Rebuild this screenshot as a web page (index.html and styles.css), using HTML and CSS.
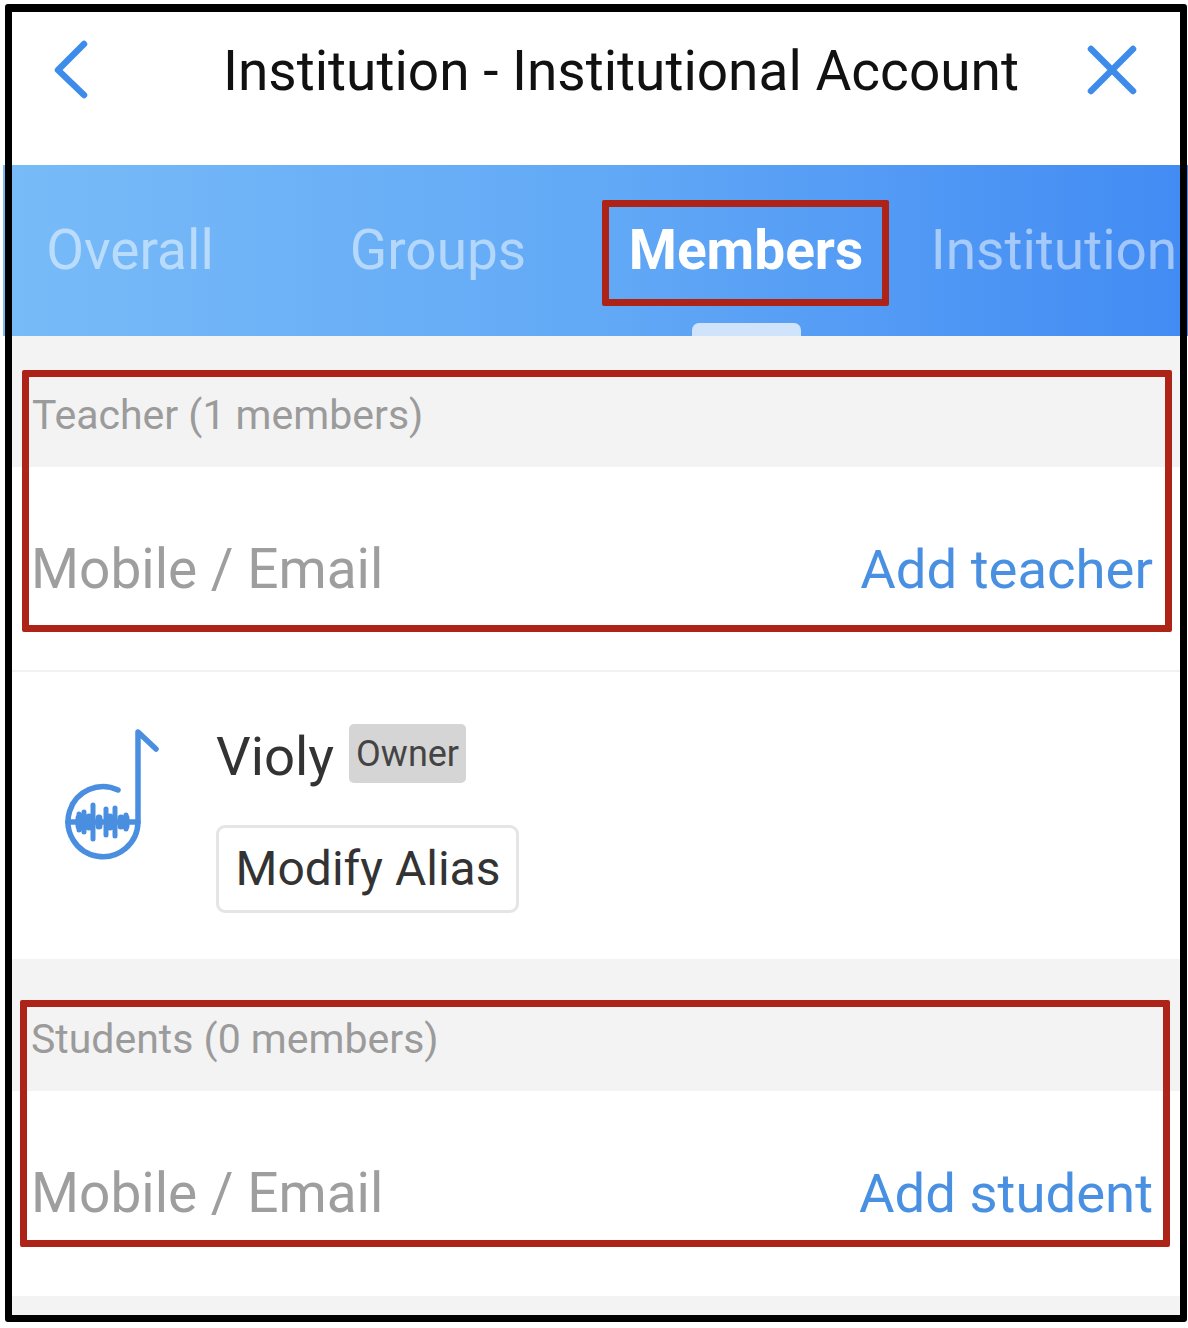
FILE: index.html
```html
<!DOCTYPE html>
<html lang="en">
<head>
    <meta charset="UTF-8">
    <meta name="viewport" content="width=device-width, initial-scale=1.0">
    <title>Institution - Institutional Account</title>
    <link rel="stylesheet" href="styles.css">
</head>
<body>
    <div class="screen">
        <header class="topbar">
            <svg class="topbar-icon" width="48" height="64" viewBox="0 0 48 64">
                <path d="M34 5 L8 31 L34 56" />
            </svg>
            <h1 class="title">Institution - Institutional Account</h1>
            <svg class="topbar-icon" width="56" height="56" viewBox="0 0 56 56">
                <path d="M7 6 L49 48 M49 6 L7 48" />
            </svg>
        </header>

        <nav class="tabs">
            <div class="tab">Overall</div>
            <div class="tab">Groups</div>
            <div class="tab tab-active">
                Members
                <span class="tab-mark"></span>
                <span class="tab-bar"></span>
            </div>
            <div class="tab">Institution</div>
        </nav>

        <section class="group">
            <div class="group-head">Teacher (1 members)</div>
            <div class="add-row add-row-line">
                <span class="add-input">Mobile / Email</span>
                <span class="add-link">Add teacher</span>
            </div>
            <div class="mark mark-teacher"></div>
        </section>

        <div class="member">
            <svg class="avatar" width="100" height="140" viewBox="0 0 100 140">
                <path d="M58 65 A35 35 0 1 0 78 97 V7 L96 24" />
                <path d="M8 97 H78" />
                <path class="wave" d="M19 89 V105 M24 87 V107 M33 80 V114 M46 84 V110 M55 83 V111 M66 90 V104" />
                <path class="wave-thick" d="M19 93 V101 M29 92 V102 M39 93 V101 M50 92 V102 M61 93 V101 M66 93 V101" />
            </svg>
            <div class="member-info">
                <div class="member-top">
                    <span class="member-name">Violy</span>
                    <span class="member-tag">Owner</span>
                </div>
                <button class="alias-btn">Modify Alias</button>
            </div>
        </div>

        <section class="group">
            <div class="group-head group-head-students">Students (0 members)</div>
            <div class="add-row add-row-students">
                <span class="add-input">Mobile / Email</span>
                <span class="add-link">Add student</span>
            </div>
            <div class="mark mark-students"></div>
        </section>

        <div class="bottom-gap"></div>
    </div>
</body>
</html>
```

FILE: styles.css
```css
html, body {
    margin: 0;
    padding: 0;
    background-color: #fff;
}
body {
    font-family: Roboto, "Liberation Sans", sans-serif;
    height: 1328px;
    overflow: hidden;
}
.screen {
    position: relative;
    margin: 12px 8px 0 12px;
    height: 1303px;
    background-color: #fff;
}
.screen::after {
    content: '';
    position: absolute;
    top: -8px;
    left: -7px;
    right: -7px;
    bottom: -7px;
    border: 7px solid #000;
    border-top-width: 8px;
    border-radius: 3px;
    pointer-events: none;
}
.topbar {
    display: flex;
    align-items: center;
    height: 117px;
    padding: 0 40px 36px 38px;
}
.topbar-icon {
    fill: none;
    stroke: #3d8bea;
    stroke-width: 6.5;
    stroke-linecap: round;
    stroke-linejoin: round;
    flex: none;
}
.title {
    margin: 0 auto 0 125px;
    font-size: 55px;
    font-weight: 400;
    color: #111;
    white-space: nowrap;
}
.tabs {
    display: grid;
    grid-template-columns: repeat(4, 308px);
    height: 171px;
    margin: 0 -8px 0 -9px;
    overflow: hidden;
    background: linear-gradient(90deg, #78bbf8 0%, #62a9f6 50%, #428bf3 100%);
}
.tab {
    position: relative;
    left: -27px;
    display: flex;
    align-items: center;
    justify-content: center;
    padding-bottom: 1px;
    font-size: 55px;
    color: rgba(255, 255, 255, 0.5);
    white-space: nowrap;
}
.tab-active {
    color: #fff;
    font-weight: 700;
}
.tab-mark {
    position: absolute;
    left: 10px;
    top: 35px;
    width: 287px;
    height: 106px;
    box-sizing: border-box;
    border: 7px solid #ae2318;
    border-radius: 2px;
}
.tab-bar {
    position: absolute;
    left: 100px;
    bottom: 0;
    width: 109px;
    height: 13px;
    background-color: #cfe3fa;
    border-radius: 7px 7px 0 0;
}
.group {
    position: relative;
}
.group-head {
    box-sizing: border-box;
    height: 131px;
    padding: 54px 0 0 20px;
    font-size: 41px;
    line-height: 50px;
    color: #9b9b9b;
    background-color: #f3f3f3;
}
.group-head-students {
    height: 132px;
    padding-top: 55px;
    padding-left: 19px;
}
.add-row {
    display: flex;
    align-items: center;
    justify-content: space-between;
    height: 205px;
    padding: 0 27px 0 19px;
    box-sizing: border-box;
    font-size: 55px;
}
.add-row-line {
    border-bottom: 2px solid #f1f1f1;
}
.add-row-students {
    padding-bottom: 2px;
}
.add-input {
    color: #9e9e9e;
}
.add-link {
    font-size: 54.5px;
    color: #4a90e2;
}
.mark {
    position: absolute;
    box-sizing: border-box;
    border: 7px solid #ae2318;
    border-radius: 2px;
}
.mark-teacher {
    left: 10px;
    top: 34px;
    width: 1150px;
    height: 262px;
}
.mark-students {
    left: 8px;
    top: 41px;
    width: 1150px;
    height: 247px;
}
.member {
    display: flex;
    height: 287px;
    padding: 52px 0 0 48px;
    box-sizing: border-box;
}
.avatar {
    flex: none;
    fill: none;
    stroke: #4a8ee0;
    stroke-width: 5.5;
    stroke-linecap: round;
    stroke-linejoin: round;
    margin-top: 1px;
}
.wave {
    stroke-width: 5;
}
.wave-thick {
    stroke-width: 7;
}
.member-info {
    margin-left: 56px;
}
.member-top {
    display: flex;
    align-items: center;
    height: 59px;
}
.member-name {
    position: relative;
    top: 2px;
    font-size: 54.5px;
    color: #333;
}
.member-tag {
    display: flex;
    align-items: center;
    height: 59px;
    margin-left: 15px;
    padding: 0 7px;
    font-size: 36px;
    color: #444;
    background-color: #d5d5d5;
    border-radius: 5px;
}
.alias-btn {
    display: block;
    width: 303px;
    height: 88px;
    margin-top: 42px;
    padding: 0 0 2px 1px;
    font-family: inherit;
    font-size: 48px;
    color: #333;
    background-color: #fff;
    border: 3px solid #e5e5e5;
    border-radius: 9px;
}
.bottom-gap {
    height: 19px;
    background-color: #f3f3f3;
}
```
